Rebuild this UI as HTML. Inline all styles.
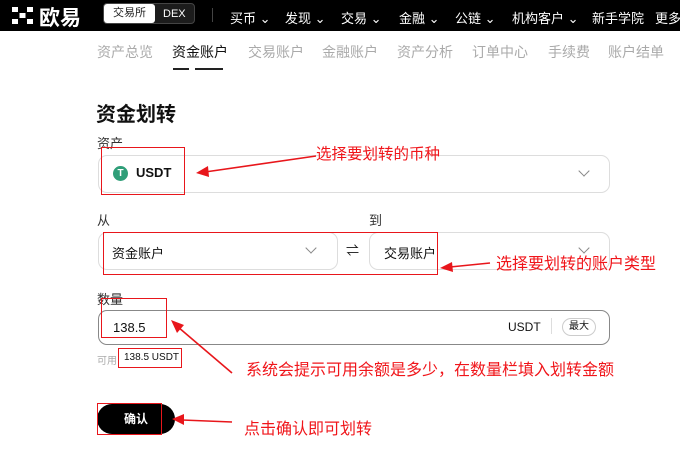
<!DOCTYPE html>
<html><head><meta charset="utf-8"><style>
*{margin:0;padding:0;box-sizing:border-box}
body{width:680px;height:453px;overflow:hidden;background:#fff;font-family:"Liberation Sans","Noto Sans CJK SC",sans-serif;position:relative;color:#111}
.a{position:absolute;white-space:nowrap}
.hdr{position:absolute;left:0;top:0;width:680px;height:31px;background:#000}
.nav{color:#fff;font-size:13px;top:8px}
.sub{font-size:14px;color:#aaa;top:42px}
.box{position:absolute;border:1px solid #ddd;border-radius:9px;background:#fff}
.red{position:absolute;border:1.5px solid #e8161b}
.rt{position:absolute;color:#f0151a;font-size:16px;white-space:nowrap}
.chev{position:absolute;width:8px;height:8px;border-right:1.3px solid #888;border-bottom:1.3px solid #888;transform:rotate(45deg)}
</style></head><body>
<div class="hdr"></div>
<svg class="a" style="left:12px;top:7px" width="21" height="17" viewBox="0 0 21 17" fill="#fff"><rect x="0" y="0" width="6" height="5"/><rect x="15" y="0" width="6" height="5"/><rect x="7.5" y="6" width="6" height="5"/><rect x="0" y="12" width="6" height="5"/><rect x="15" y="12" width="6" height="5"/></svg>
<div class="a" style="left:39px;top:2px;color:#fff;font-size:21px;font-weight:bold">欧易</div>
<div class="a" style="left:103px;top:3px;width:92px;height:21px;border:1px solid #444;border-radius:4px;background:#1c1c1c"></div>
<div class="a" style="left:104px;top:4px;width:51px;height:19px;background:#fff;border-radius:3px;font-size:11px;text-align:center;line-height:19px;color:#222">交易所</div>
<div class="a" style="left:163px;top:8px;color:#fff;font-size:11px">DEX</div>
<div class="a" style="left:212px;top:8px;width:1px;height:14px;background:#444"></div>
<div class="a nav" style="left:230px">买币 ⌄</div>
<div class="a nav" style="left:285px">发现 ⌄</div>
<div class="a nav" style="left:341px">交易 ⌄</div>
<div class="a nav" style="left:399px">金融 ⌄</div>
<div class="a nav" style="left:455px">公链 ⌄</div>
<div class="a nav" style="left:512px">机构客户 ⌄</div>
<div class="a nav" style="left:592px">新手学院</div>
<div class="a nav" style="left:655px">更多</div>
<div class="a sub" style="left:97px">资产总览</div>
<div class="a sub" style="left:172px;color:#111">资金账户</div>
<div class="a sub" style="left:248px">交易账户</div>
<div class="a sub" style="left:322px">金融账户</div>
<div class="a sub" style="left:397px">资产分析</div>
<div class="a sub" style="left:472px">订单中心</div>
<div class="a sub" style="left:548px">手续费</div>
<div class="a sub" style="left:608px">账户结单</div>
<div class="a" style="left:173px;top:68px;width:16px;height:2px;background:#222"></div>
<div class="a" style="left:195px;top:68px;width:28px;height:2px;background:#222"></div>
<div class="a" style="left:96px;top:98px;font-size:20px;font-weight:bold">资金划转</div>
<div class="a" style="left:97px;top:133px;font-size:13px;color:#333">资产</div>
<div class="box" style="left:98px;top:155px;width:512px;height:38px"></div>
<div class="a" style="left:113px;top:166px;width:15px;height:15px;border-radius:50%;background:#2f9e78;color:#fff;font-size:10px;font-weight:bold;text-align:center;line-height:15px">T</div>
<div class="a" style="left:136px;top:165px;font-size:13px;font-weight:bold">USDT</div>
<div class="chev" style="left:580px;top:167px"></div>
<div class="a" style="left:97px;top:210px;font-size:13px;color:#333">从</div>
<div class="a" style="left:369px;top:210px;font-size:13px;color:#333">到</div>
<div class="box" style="left:98px;top:232px;width:240px;height:38px"></div>
<div class="a" style="left:112px;top:243px;font-size:13px">资金账户</div>
<div class="chev" style="left:307px;top:244px"></div>
<div class="a" style="left:346px;top:240px;font-size:13px">⇌</div>
<div class="box" style="left:369px;top:232px;width:241px;height:38px"></div>
<div class="a" style="left:384px;top:243px;font-size:13px">交易账户</div>
<div class="chev" style="left:580px;top:244px"></div>
<div class="a" style="left:97px;top:289px;font-size:13px;color:#333">数量</div>
<div class="box" style="left:98px;top:310px;width:512px;height:35px;border:1.5px solid #888"></div>
<div class="a" style="left:113px;top:320px;font-size:13px">138.5</div>
<div class="a" style="left:508px;top:320px;font-size:12px">USDT</div>
<div class="a" style="left:551px;top:318px;width:1px;height:16px;background:#ddd"></div>
<div class="a" style="left:562px;top:318px;width:34px;height:18px;border:1px solid #ccc;border-radius:9px;font-size:10px;text-align:center;line-height:16px">最大</div>
<div class="a" style="left:97px;top:352px;font-size:10px;color:#aaa">可用</div>
<div class="a" style="left:124px;top:352px;font-size:10px">138.5 USDT</div>
<div class="a" style="left:97px;top:404px;width:78px;height:30px;border-radius:15px;background:#000;color:#fff;font-size:12px;font-weight:bold;line-height:30px;padding-left:27px">确认</div>
<div class="red" style="left:101px;top:147px;width:84px;height:48px"></div>
<div class="red" style="left:103px;top:232px;width:335px;height:43px"></div>
<div class="red" style="left:101px;top:298px;width:66px;height:40px"></div>
<div class="red" style="left:118px;top:348px;width:64px;height:20px"></div>
<div class="red" style="left:97px;top:403px;width:65px;height:32px"></div>
<div class="rt" style="left:316px;top:142px;font-size:15.5px">选择要划转的币种</div>
<div class="rt" style="left:496px;top:250px">选择要划转的账户类型</div>
<div class="rt" style="left:246px;top:356px">系统会提示可用余额是多少，在数量栏填入划转金额</div>
<div class="rt" style="left:244px;top:415px">点击确认即可划转</div>
<svg class="a" style="left:0;top:0" width="680" height="453" fill="#e8161b" stroke="#e8161b" stroke-width="1.6">
<line x1="316" y1="156" x2="205" y2="172"/><polygon points="196,173 208,166 209,177" stroke="none"/>
<line x1="490" y1="263" x2="450" y2="267"/><polygon points="440,268 452,262 453,272" stroke="none"/>
<line x1="232" y1="373" x2="178" y2="327"/><polygon points="171,320 184,325 177,333" stroke="none"/>
<line x1="232" y1="422" x2="182" y2="420"/><polygon points="172,419 184,414 184,425" stroke="none"/>
</svg>
</body></html>
